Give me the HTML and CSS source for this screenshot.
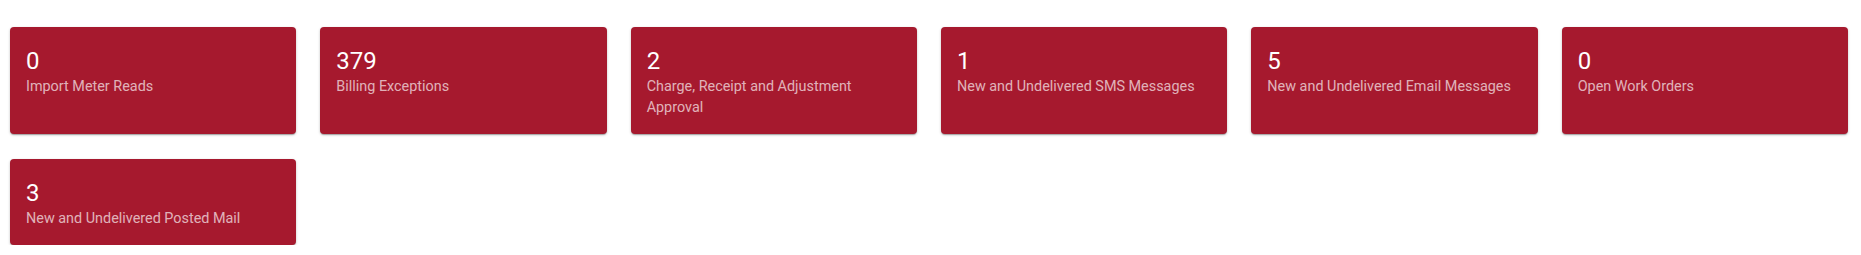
FILE: index.html
```html
<!DOCTYPE html>
<html lang="en">
<head>
<meta charset="utf-8">
<title>Dashboard</title>
<link rel="stylesheet" href="styles.css">
</head>
<body>
<div class="tiles">
  <div class="tile"><div class="count">0</div><div class="label">Import Meter Reads</div></div>
  <div class="tile"><div class="count">379</div><div class="label">Billing Exceptions</div></div>
  <div class="tile"><div class="count">2</div><div class="label">Charge, Receipt and Adjustment Approval</div></div>
  <div class="tile"><div class="count">1</div><div class="label">New and Undelivered SMS Messages</div></div>
  <div class="tile"><div class="count">5</div><div class="label">New and Undelivered Email Messages</div></div>
  <div class="tile"><div class="count">0</div><div class="label">Open Work Orders</div></div>
  <div class="tile"><div class="count">3</div><div class="label">New and Undelivered Posted Mail</div></div>
</div>
</body>
</html>
```
FILE: styles.css
```css
html, body {
  margin: 0;
  padding: 0;
  background: #ffffff;
}
body {
  font-family: Roboto, "Liberation Sans", Arial, sans-serif;
}
.tiles {
  display: grid;
  grid-template-columns: repeat(6, 1fr);
  column-gap: 24px;
  row-gap: 25px;
  padding: 27px 13px 0 10px;
}
.tile {
  background: #a6192e;
  border-radius: 4px;
  padding: 19px 16px 16px 16px;
  box-shadow: 0 1px 3px rgba(0,0,0,0.2), 0 1px 1px rgba(0,0,0,0.14), 0 2px 1px -1px rgba(0,0,0,0.12);
  color: #ffffff;
}
.count {
  font-size: 24px;
  line-height: 30px;
  font-weight: 400;
  color: #ffffff;
}
.label {
  font-size: 14.4px;
  line-height: 21px;
  color: rgba(255,255,255,0.68);
}
```
